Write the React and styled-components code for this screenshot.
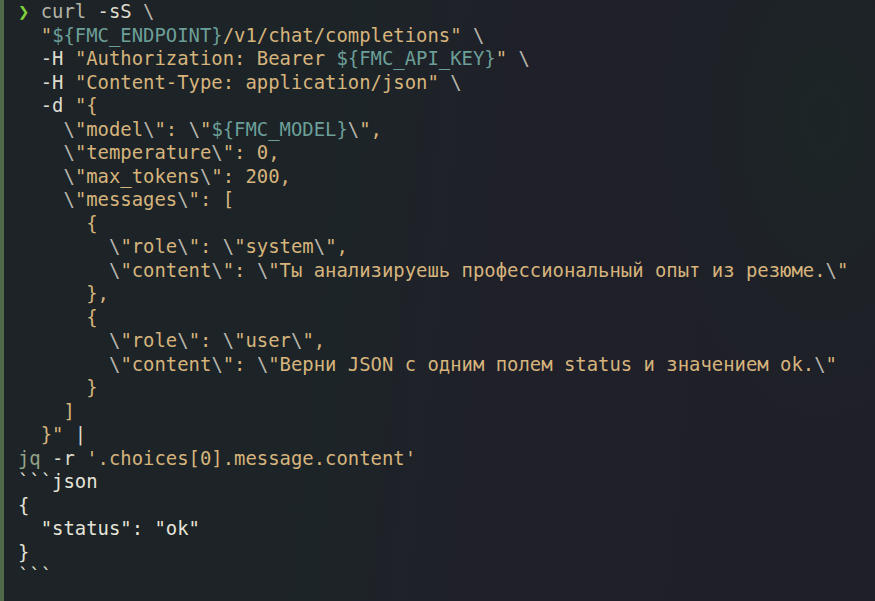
import React from 'react'
import styled, { createGlobalStyle } from 'styled-components'

const GlobalStyle = createGlobalStyle`
    html, body {
        margin: 0;
        padding: 0;
        background: #1f1f28;
    }
`

const Terminal = styled.div`
    width: 875px;
    height: 601px;
    box-sizing: border-box;
    overflow: hidden;
    border-left: 4px solid #4f6a47;
    padding: 0 0 0 14px;
    background:
        radial-gradient(ellipse 180px 320px at 820px 120px, rgba(28, 38, 38, 0.9), rgba(28, 38, 38, 0)),
        linear-gradient(96deg, #1d2327 0%, #1d2428 40%, #1f2029 56%, #1f1f28 100%);
    font-family: "DejaVu Sans Mono", "Liberation Mono", monospace;
    font-size: 18.9px;
    line-height: 23.5px;
    color: #dedccf;
`

const Line = styled.div`
    white-space: pre;
    height: 23.5px;
`

const colors = {
    plain: '#dedccf',
    cmd: '#b4b4a6',
    jq: '#93a58a',
    str: '#d6b47c',
    vari: '#6c9f98',
    esc: '#b8b6ad',
    out: '#e6e4d8'
}

const Tok = styled.span`
    color: ${p => colors[p.$kind] || colors.plain};
`

const Prompt = styled.span`
    display: inline-block;
    width: 1ch;
    color: #7fd03c;
    font-weight: bold;
`

// every line is a list of [kind, text]
const lines = [
    [['prompt', ''], ['plain', ' '], ['cmd', 'curl'], ['plain', ' -sS '], ['esc', '\\']],
    [['plain', '  '], ['str', '"'], ['vari', '${FMC_ENDPOINT}'], ['str', '/v1/chat/completions"'], ['plain', ' '], ['esc', '\\']],
    [['plain', '  -H '], ['str', '"Authorization: Bearer '], ['vari', '${FMC_API_KEY}'], ['str', '"'], ['plain', ' '], ['esc', '\\']],
    [['plain', '  -H '], ['str', '"Content-Type: application/json"'], ['plain', ' '], ['esc', '\\']],
    [['plain', '  -d '], ['str', '"{']],
    [['plain', '    '], ['esc', '\\'], ['str', '"model'], ['esc', '\\'], ['str', '": '], ['esc', '\\'], ['str', '"'], ['vari', '${FMC_MODEL}'], ['esc', '\\'], ['str', '",']],
    [['plain', '    '], ['esc', '\\'], ['str', '"temperature'], ['esc', '\\'], ['str', '": 0,']],
    [['plain', '    '], ['esc', '\\'], ['str', '"max_tokens'], ['esc', '\\'], ['str', '": 200,']],
    [['plain', '    '], ['esc', '\\'], ['str', '"messages'], ['esc', '\\'], ['str', '": [']],
    [['str', '      {']],
    [['plain', '        '], ['esc', '\\'], ['str', '"role'], ['esc', '\\'], ['str', '": '], ['esc', '\\'], ['str', '"system'], ['esc', '\\'], ['str', '",']],
    [['plain', '        '], ['esc', '\\'], ['str', '"content'], ['esc', '\\'], ['str', '": '], ['esc', '\\'], ['str', '"Ты анализируешь профессиональный опыт из резюме.'], ['esc', '\\'], ['str', '"']],
    [['str', '      },']],
    [['str', '      {']],
    [['plain', '        '], ['esc', '\\'], ['str', '"role'], ['esc', '\\'], ['str', '": '], ['esc', '\\'], ['str', '"user'], ['esc', '\\'], ['str', '",']],
    [['plain', '        '], ['esc', '\\'], ['str', '"content'], ['esc', '\\'], ['str', '": '], ['esc', '\\'], ['str', '"Верни JSON с одним полем status и значением ok.'], ['esc', '\\'], ['str', '"']],
    [['str', '      }']],
    [['str', '    ]']],
    [['str', '  }"'], ['plain', ' |']],
    [['jq', 'jq'], ['plain', ' -r '], ['str', "'.choices[0].message.content'"]],
    [['out', '```json']],
    [['out', '{']],
    [['out', '  "status": "ok"']],
    [['out', '}']],
    [['out', '```']]
]

export default function App () {
    return (
        <>
            <GlobalStyle />
            <Terminal>
                {lines.map((line, i) => (
                    <Line key={i}>
                        {line.map(([kind, text], j) =>
                            kind === 'prompt'
                                ? <Prompt key={j}>❯</Prompt>
                                : <Tok key={j} $kind={kind}>{text}</Tok>
                        )}
                    </Line>
                ))}
            </Terminal>
        </>
    )
}
